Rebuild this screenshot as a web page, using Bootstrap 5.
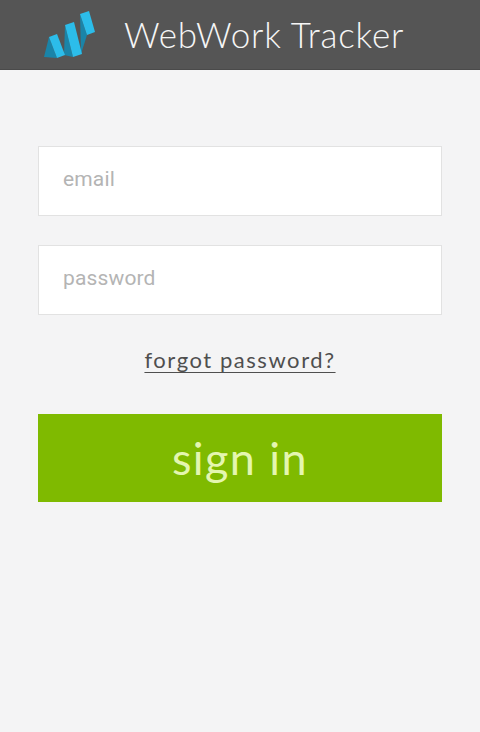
<!DOCTYPE html>
<html lang="en">
<head>
<meta charset="utf-8">
<title>WebWork Tracker</title>
<meta name="viewport" content="width=device-width, initial-scale=1">
<link rel="stylesheet" href="https://cdn.jsdelivr.net/npm/bootstrap@5.3.0/dist/css/bootstrap.min.css">
<style>
html,body{height:100%}
body{background:#f4f4f5;font-family:"Lato","Liberation Sans",sans-serif;overflow:hidden}
.app-head{background:#555;height:70px;border-bottom:1px solid #4a4a4a;padding:0 0 0 42px;gap:26px}
.app-logo{width:56px;height:50px;flex:none}
.app-title{color:#f6f6f6;font-size:35px;font-weight:300;letter-spacing:.8px;line-height:1;margin:0}
.login-form{padding:76px 38px 0}
.login-form .form-control{height:70px;border:1px solid #e2e2e2;border-radius:0;background:#fff;padding:0 24px 4px;font-family:"Roboto","Liberation Sans",sans-serif;font-size:21px;font-weight:400;letter-spacing:.15px;box-shadow:none}
.login-form .form-control::placeholder{color:#b4b4b4;opacity:1}
.gap-fields{margin-bottom:29px}
.forgot-wrap{margin:32px 0 39px;line-height:26px}
.forgot{color:#4f4f4f;font-size:22px;letter-spacing:1.55px;text-underline-offset:4px;text-decoration-thickness:1px}
.signin{display:block;width:100%;height:88px;background:#7fba00;border:0;border-radius:0;color:#e4f6b0;font-size:45px;font-weight:400;letter-spacing:1.4px;line-height:1;padding:0}
.signin:hover,.signin:active{background:#7fba00!important;color:#e4f6b0!important}
</style>
</head>
<body>
<header class="app-head d-flex align-items-center">
  <svg class="app-logo" viewBox="0 0 56 50" aria-hidden="true">
    <g fill="#1a84a8">
      <polygon points="2,47 7,27 15,48"/>
      <polygon points="22,45 23,15 31,47"/>
      <polygon points="39,44 38,4 45,25"/>
    </g>
    <g fill="#2cbdea">
      <polygon points="7,27 15,24 23,45 15,48"/>
      <polygon points="23,15 32,12 40,44 31,47"/>
      <polygon points="38,4 47,1 53,22 45,25"/>
    </g>
  </svg>
  <h1 class="app-title">WebWork Tracker</h1>
</header>
<main class="login-form">
  <form>
    <input class="form-control gap-fields" type="email" placeholder="email" aria-label="email">
    <input class="form-control" type="password" placeholder="password" aria-label="password">
    <div class="forgot-wrap text-center"><a class="forgot" href="#">forgot password?</a></div>
    <button class="btn signin" type="button">sign in</button>
  </form>
</main>
<script src="https://cdn.jsdelivr.net/npm/bootstrap@5.3.0/dist/js/bootstrap.bundle.min.js"></script>
</body>
</html>
